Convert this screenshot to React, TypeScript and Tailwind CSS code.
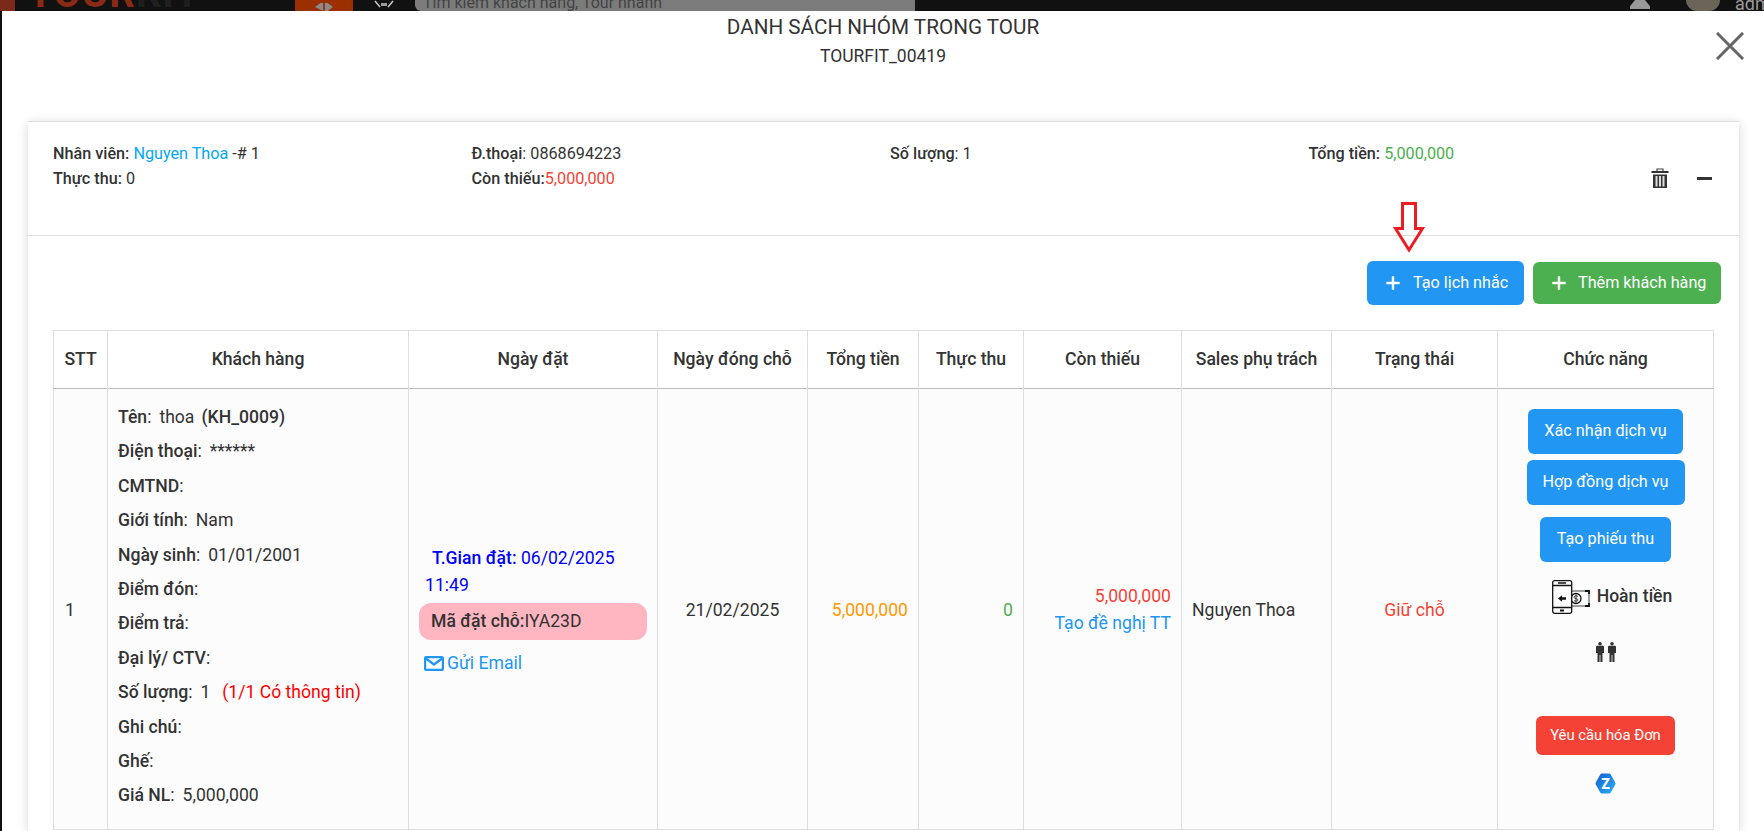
const Plus = () => (
  <svg viewBox="0 0 24 24" className="h-[22px] w-[22px] fill-white stroke-white stroke-[0.6]">
    <path d="M19 13h-6v6h-2v-6H5v-2h6V5h2v6h6v2z" />
  </svg>
);

const MailIcon = () => (
  <svg viewBox="0 0 20 15" className="h-[15px] w-[20px] shrink-0" fill="none" stroke="#2196f3" strokeWidth="2.200">
    <rect x="1.100" y="1.100" width="17.800" height="12.800" rx="1" />
    <path d="M2 2.500l8 6 8-6" />
  </svg>
);

const RefundIcon = () => (
  <svg viewBox="0 0 38 34" className="h-[34px] w-[38px]" fill="none" stroke="#111" strokeWidth="1.300">
    <rect x="19" y="11" width="18" height="15" fill="#fff" strokeWidth="0.800" />
    <path d="M33 11h4v3M33 26h4v-3" strokeWidth="1.800" />
    <circle cx="24" cy="18.500" r="5" fill="#fff" />
    <path d="M26 16.500c-1-1-4-1-4 .8s4 1 4 2.600-3 1.600-4 .6M24 14.500v8" strokeWidth="0.800" />
    <rect x="0.700" y="0.700" width="19" height="32.600" rx="2" fill="#fff" />
    <path d="M1 5.500h18M1 27.500h18" />
    <path d="M6 3h8" strokeWidth="1.500" />
    <path d="M8 30.500h4" strokeWidth="2" />
    <path d="M6 18.500l4-3.200v2h4v2.400h-4v2z" fill="#111" stroke="none" />
  </svg>
);

const PeopleIcon = () => (
  <svg viewBox="0 0 22 20" className="h-5 w-[22px] fill-[#333]">
    <circle cx="5" cy="1.800" r="1.800" />
    <path d="M1 5c0-.8.600-1.200 1.300-1.200h5.400C8.400 3.800 9 4.200 9 5v6H7.500v9H5.400v-7h-.8v7H2.500v-9H1z" />
    <circle cx="17" cy="1.800" r="1.800" />
    <path d="M13 5c0-.8.600-1.200 1.300-1.200h5.400c.7 0 1.300.4 1.300 1.200v6h-1.500v9h-2.100v-7h-.8v7h-2.100v-9H13z" />
  </svg>
);

const ZaloIcon = () => (
  <div className="relative h-[21px] w-[21px]">
    <svg viewBox="0 0 21 21" className="h-[21px] w-[21px]">
      <defs>
        <linearGradient id="zalo" x1="0" y1="0" x2="1" y2="1">
          <stop offset="0" stopColor="#1565d8" />
          <stop offset="1" stopColor="#29a9f5" />
        </linearGradient>
      </defs>
      <polygon points="7,2.500 14,2.500 18.500,10.500 14,18.500 7,18.500 2.500,10.500" fill="url(#zalo)" stroke="url(#zalo)" strokeWidth="4" strokeLinejoin="round" />
    </svg>
    <span className="absolute inset-0 flex items-center justify-center text-[14px] font-black leading-none text-white">Z</span>
  </div>
);

const TrashIcon = () => (
  <svg viewBox="0 0 18 20" className="h-5 w-[18px]">
    <path d="M6 3V1h6v2" fill="none" stroke="#444" strokeWidth="1.200" />
    <rect x="0.500" y="3" width="17" height="2" fill="#333" />
    <rect x="2" y="6.500" width="14" height="13.500" fill="#333" />
    <rect x="4.500" y="8" width="2" height="10.500" fill="#ddd" />
    <rect x="8" y="8" width="2" height="10.500" fill="#ddd" />
    <rect x="11.500" y="8" width="2" height="10.500" fill="#ddd" />
  </svg>
);

const customerRows: [string, string][] = [
  ["Điện thoại", "******"],
  ["CMTND", ""],
  ["Giới tính", "Nam"],
  ["Ngày sinh", "01/01/2001"],
  ["Điểm đón", ""],
  ["Điểm trả", ""],
  ["Đại lý/ CTV", ""],
];

const Label = ({ name, value }: { name: string; value?: string }) => (
  <div>
    <span className="font-medium">{name}</span>:
    {value && <span className="ml-[8px]">{value}</span>}
  </div>
);

const headers = [
  "STT",
  "Khách hàng",
  "Ngày đặt",
  "Ngày đóng chỗ",
  "Tổng tiền",
  "Thực thu",
  "Còn thiếu",
  "Sales phụ trách",
  "Trạng thái",
  "Chức năng",
];

const App = () => {
  return (
    <div className="relative flex h-[831px] w-full flex-col overflow-hidden bg-[#111] font-['Roboto',sans-serif] text-[#333]">
      {/* dimmed app bar behind the dialog */}
      <div className="flex h-[11px] shrink-0 items-end overflow-hidden">
        <div className="h-[11px] w-[15px] bg-[#7a2a16]" />
        <div className="ml-[13px] -mb-[3px] w-[267px] text-[40px] font-bold leading-none tracking-[1px] text-[#8a2a14]">
          TOUR<span className="text-[#1f1f1f]">KIT</span>
        </div>
        <div className="flex h-[11px] w-[58px] justify-center bg-[#9c2f00]">
          <div className="mt-[3px] h-[8px] w-[18px] bg-[#8a8a8a] [clip-path:polygon(0_50%,30%_0,45%_0,45%_100%,30%_100%,55%_100%,55%_0,70%_0,100%_50%,70%_100%,55%_100%,45%_100%)]" />
        </div>
        <svg viewBox="0 0 22 8" className="ml-[20px] h-2 w-[22px] self-start" fill="none" stroke="#c8c8c8" strokeWidth="1.500">
          <path d="M2 1l5 6M20 1l-5 6M9 3v3M11 3v3M13 3v3" />
        </svg>
        <div className="ml-[20px] h-[11px] w-[500px] rounded-bl-md bg-[#7b7b7b] pl-[8px] text-[16px] leading-[6px] text-[#444]">
          Tìm kiếm khách hàng, Tour nhanh
        </div>
        <div className="ml-auto mr-[36px] h-[9px] w-[20px] self-start bg-[#999] [clip-path:polygon(25%_0,75%_0,100%_70%,100%_100%,0_100%,0_70%)]" />
        <div className="mr-[15px] h-[11px] w-[34px] rounded-b-full bg-[#6b6458]" />
        <div className="w-[29px] text-[18px] leading-[14px] text-[#999]">adm</div>
      </div>

      <div className="ml-[2px] flex min-h-0 flex-1 flex-col bg-white">
        <div className="relative h-[110px] shrink-0 text-center">
          <div className="pt-[3px] text-[20.700px] leading-[27px]">DANH SÁCH NHÓM TRONG TOUR</div>
          <div className="mt-[3px] text-[17.500px] leading-[24px]">TOURFIT_00419</div>
          <svg viewBox="0 0 28 28" className="absolute right-[20px] top-[21px] h-7 w-7" stroke="#666" strokeWidth="3" strokeLinecap="square">
            <path d="M2 2l24 24M26 2L2 26" />
          </svg>
        </div>

        <div className="ml-[26px] mr-[25px] flex-1 border-t border-[#dedede] bg-white shadow-[0_2px_10px_rgba(0,0,0,0.16)]">
          <div className="relative grid h-[114px] grid-cols-4 border-b border-[#dedede] pl-[25px] pr-[12px] pt-[19px] text-[16.200px] leading-[25px]">
            <div>
              <div>
                <span className="font-medium">Nhân viên:</span> <span className="text-[#03a9f4]">Nguyen Thoa</span> -# 1
              </div>
              <div>
                <span className="font-medium">Thực thu:</span> 0
              </div>
            </div>
            <div>
              <div>
                <span className="font-medium">Đ.thoại</span>: 0868694223
              </div>
              <div>
                <span className="font-medium">Còn thiếu:</span>
                <span className="text-[#f44336]">5,000,000</span>
              </div>
            </div>
            <div>
              <span className="font-medium">Số lượng</span>: 1
            </div>
            <div>
              <span className="font-medium">Tổng tiền:</span> <span className="text-[#4caf50]">5,000,000</span>
            </div>
            <div className="absolute right-[27px] top-[46px] flex items-center gap-[28px]">
              <TrashIcon />
              <div className="h-[3px] w-[15px] bg-[#333]" />
            </div>
          </div>

          <div className="flex items-center justify-end gap-[9px] pr-[18px] pt-[25px]">
            <button className="flex h-[44px] w-[157px] items-center rounded-[6px] bg-[#2196f3] pl-[15px] text-[16.200px] text-white">
              <Plus />
              <span className="ml-[9px]">Tạo lịch nhắc</span>
            </button>
            <button className="flex h-[42px] w-[188px] items-center rounded-[6px] bg-[#4caf50] pl-[15px] text-[16.200px] text-white">
              <Plus />
              <span className="ml-[8px]">Thêm khách hàng</span>
            </button>
          </div>

          <div className="ml-[25px] mt-[25px] w-[1660px]">
            <table className="w-full table-fixed border-collapse border border-[#dedede] text-[17.600px]">
              <colgroup>
                <col className="w-[54px]" />
                <col className="w-[301px]" />
                <col className="w-[249px]" />
                <col className="w-[150px]" />
                <col className="w-[111px]" />
                <col className="w-[105px]" />
                <col className="w-[158px]" />
                <col className="w-[150px]" />
                <col className="w-[166px]" />
                <col className="w-[216px]" />
              </colgroup>
              <thead>
                <tr className="h-[58px] border-b border-[#bdbdbd]">
                  {headers.map((h) => (
                    <th key={h} className="border-r border-[#dedede] text-center font-medium">
                      {h}
                    </th>
                  ))}
                </tr>
              </thead>
              <tbody>
                <tr className="h-[441px] bg-[#fcfcfc]">
                  <td className="border-r border-[#dedede] pl-[11px] pt-[2px]">1</td>
                  <td className="border-r border-[#dedede] pl-[10px] pt-[11px] align-top leading-[34.400px]">
                    <div>
                      <span className="font-medium">Tên</span>:<span className="ml-[8px]">thoa</span>
                      <span className="ml-[7px] font-medium">(KH_0009)</span>
                    </div>
                    {customerRows.map(([name, value]) => (
                      <Label key={name} name={name} value={value} />
                    ))}
                    <div>
                      <span className="font-medium">Số lượng</span>:<span className="ml-[8px]">1</span>
                      <span className="ml-[12px] text-[#ff0000]">(1/1 Có thông tin)</span>
                    </div>
                    <Label name="Ghi chú" />
                    <Label name="Ghế" />
                    <Label name="Giá NL" value="5,000,000" />
                  </td>
                  <td className="border-r border-[#dedede] px-[10px] pt-[2px]">
                    <div className="px-[6px] indent-[7px] leading-[27px] text-[#0000ff]">
                      <span className="font-medium">T.Gian đặt:</span> 06/02/2025 11:49
                    </div>
                    <div className="mt-[4px] flex h-[37px] items-center rounded-[12px] bg-[#ffb6c1] pl-[12px]">
                      <span className="font-medium">Mã đặt chỗ:</span>IYA23D
                    </div>
                    <div className="mt-[12px] flex h-[24px] items-center pl-[5px] text-[#2196f3]">
                      <MailIcon />
                      <span className="ml-[3px]">Gửi Email</span>
                    </div>
                  </td>
                  <td className="border-r border-[#dedede] pt-[2px] text-center">21/02/2025</td>
                  <td className="border-r border-[#dedede] pr-[10px] pt-[2px] text-right text-[#ff9800]">5,000,000</td>
                  <td className="border-r border-[#dedede] pr-[10px] pt-[2px] text-right text-[#4caf50]">0</td>
                  <td className="border-r border-[#dedede] pr-[10px] pt-[2px] text-right leading-[27px]">
                    <div className="text-[#f44336]">5,000,000</div>
                    <div className="text-[#2196f3]">Tạo đề nghị TT</div>
                  </td>
                  <td className="border-r border-[#dedede] pl-[10px] pt-[2px]">Nguyen Thoa</td>
                  <td className="border-r border-[#dedede] pt-[2px] text-center text-[#f44336]">Giữ chỗ</td>
                  <td className="pt-[20px] align-top">
                    <div className="flex flex-col items-center text-white">
                      <button className="h-[45px] w-[155px] rounded-[6px] bg-[#2196f3] text-[16.200px]">Xác nhận dịch vụ</button>
                      <button className="mt-[6px] h-[45px] w-[158px] rounded-[6px] bg-[#2196f3] text-[16.200px]">Hợp đồng dịch vụ</button>
                      <button className="mt-[12px] h-[45px] w-[131px] rounded-[6px] bg-[#2196f3] text-[16.200px]">Tạo phiếu thu</button>
                      <div className="ml-[13px] mt-[18px] flex items-center gap-[7px] text-[17.600px] font-medium text-[#333]">
                        <RefundIcon />
                        <span className="-mt-[2px]">Hoàn tiền</span>
                      </div>
                      <div className="mt-[28px]">
                        <PeopleIcon />
                      </div>
                      <button className="mt-[54px] h-[39px] w-[139px] rounded-[6px] bg-[#f44336] text-[14.800px]">Yêu cầu hóa Đơn</button>
                      <div className="mt-[18px]">
                        <ZaloIcon />
                      </div>
                    </div>
                  </td>
                </tr>
              </tbody>
            </table>
          </div>
        </div>
      </div>

      {/* red annotation arrow pasted over the screenshot */}
      <svg viewBox="0 0 32 52" className="absolute left-[1393px] top-[201px] h-[52px] w-[32px]" fill="none" stroke="#ed1c24" strokeWidth="3">
        <path d="M9.500 2.500h13v25h7L16 49 2.500 27.500h7z" />
      </svg>
    </div>
  );
};

export default App;
